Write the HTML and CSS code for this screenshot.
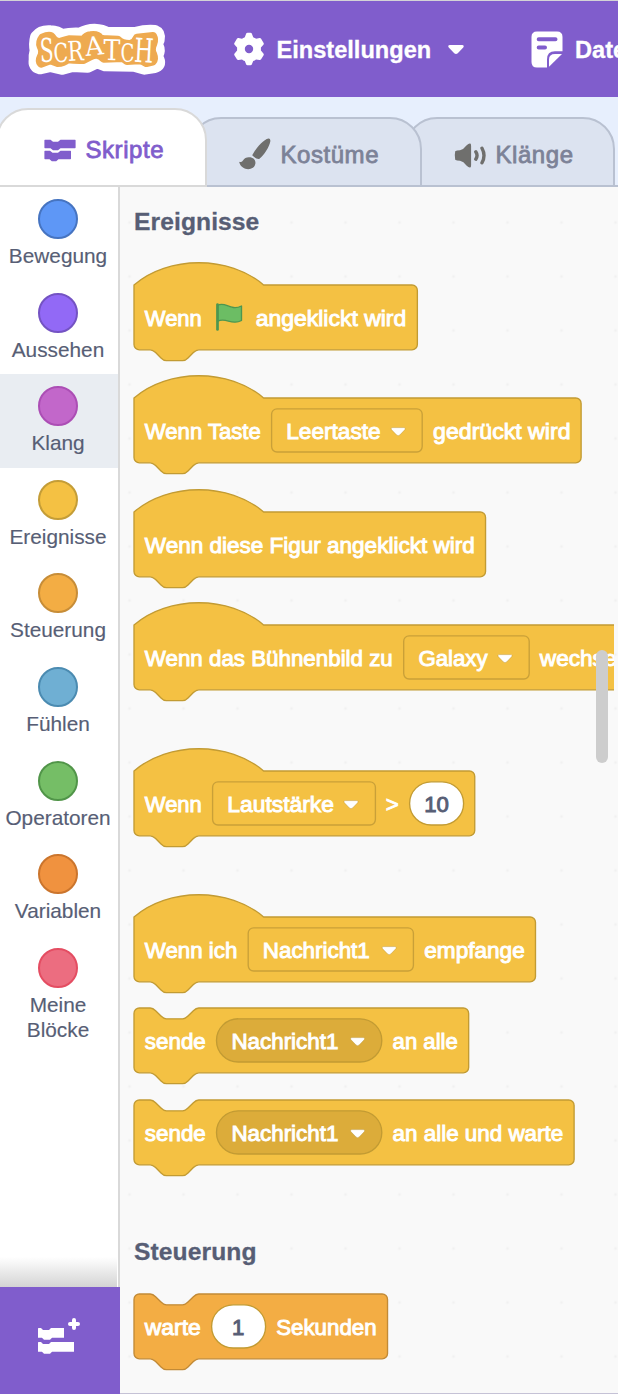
FILE: index.html
```html
<!DOCTYPE html>
<html lang="de">
<head>
<meta charset="utf-8">
<title>Scratch</title>
<link rel="stylesheet" href="styles.css">
</head>
<body>
<svg class="defs" width="0" height="0" aria-hidden="true">
  <symbol id="caret" viewBox="0 0 16 10" overflow="visible"><path d="M2.4 1H13.6C15 1 15.5 2.3 14.6 3.2L9.6 8.4Q8 9.8 6.400 8.4L1.4 3.2C.5 2.3 1 1 2.4 1Z"/></symbol>
</svg>
<header class="menu-bar">
  <svg class="logo" viewBox="80 65 420 165">
    <path class="logo-rim" d="M113 112Q125 97 150 99Q170 100 183 110Q215 104 240 106Q262 94 282 94Q305 95 320 104L405 104Q440 95 462 98Q472 102 469 118Q460 130 467 140Q472 150 466 162Q463 172 469 180Q474 192 462 194L432 199L400 190L315 189L290 179L262 193L215 191L185 199L150 191L120 198Q106 195 109 180Q108 165 112 150Q108 130 113 112Z"/>
    <path class="logo-fill" d="M126 112Q150 100 157 113Q170 128 182 124Q195 120 206 117L250 118Q258 106 270 105Q292 102 298 112Q302 117 320 117L352 118Q366 132 390 131Q404 128 410 112L458 107Q464 118 459 130Q450 148 459 163Q464 175 457 184L438 188Q425 180 415 180L380 182L368 173L310 175Q300 163 288 163Q275 163 250 179Q225 180 202 177Q190 188 172 188L150 180L122 190Q115 182 121 170Q130 155 121 138Q116 125 126 112Z"/>
    <g class="logo-text">
      <text transform="translate(120 185) rotate(-2) scale(.6 .98)">S</text>
      <text transform="translate(161 186) rotate(-3) scale(.57 .78)">C</text>
      <text transform="translate(203 182) rotate(-3) scale(.64 .82)">R</text>
      <text transform="translate(257 167) rotate(-6) scale(.76 .77)">A</text>
      <text transform="translate(309 179) rotate(1) scale(.76 .86)">T</text>
      <text transform="translate(361 184) rotate(-1) scale(.54 .75)">C</text>
      <text transform="translate(400 184) rotate(3) scale(.66 1)">H</text>
    </g>
  </svg>
  <div class="menu-item settings">
    <svg class="gear" viewBox="0 0 32 34"><path fill-rule="evenodd" d="M13.2 1.6Q13.6 .8 14.5 .8H17.5Q18.4 .8 18.8 1.6L20.2 5.2Q21.7 5.8 23 6.7L26.6 6.1Q27.6 6 28.1 6.8L30.6 11Q31.1 11.9 30.4 12.7L27.9 15.6V18.6L30.4 21.6Q31.1 22.4 30.6 23.3L28.1 27.3Q27.6 28.1 26.6 28L23 27.4Q21.7 28.4 20.2 29L18.8 32.5Q18.4 33.3 17.5 33.3H14.5Q13.6 33.3 13.2 32.5L11.8 29Q10.3 28.4 9 27.4L5.4 28Q4.4 28.1 3.9 27.3L1.4 23.3Q.9 22.4 1.6 21.6L4.1 18.6V15.6L1.6 12.7Q.9 11.9 1.4 11L3.9 6.8Q4.4 6 5.4 6.1L9 6.7Q10.3 5.8 11.8 5.2ZM16 12.8A4.2 4.2 0 1 0 16 21.2A4.2 4.2 0 1 0 16 12.8Z"/></svg>
    <span>Einstellungen</span>
    <svg class="menu-caret"><use href="#caret"/></svg>
  </div>
  <div class="menu-item">
    <svg class="file" viewBox="0 0 32 37"><path fill-rule="evenodd" d="M6 .5H26Q31.5 .5 31.5 6V20.3H24Q16 20.3 16 28.5V36.5H6Q.5 36.5 .5 31V6Q.5 .5 6 .5ZM7.7 6.2A2 2 0 0 0 7.7 10.2H24.5A2 2 0 0 0 24.5 6.2ZM7.7 14.4A2 2 0 0 0 7.7 18.4H14A2 2 0 0 0 14 14.4Z"/><path d="M18 35.8V28.5Q18 23 24 23H31Z"/></svg>
    <span>Datei</span>
  </div>
</header>
<nav class="tabs">
  <div class="tab active">
    <svg class="tab-icon code" viewBox="0 0 32 23"><path d="M1 .7H6.5L9 2.7H14L16.5 .7H31Q31.6 .7 31.6 1.3V8.6Q31.6 9.2 31 9.2H16.5L14 11.2H9L6.5 9.2H1Q.4 9.2 .4 8.6V1.3Q.4 .7 1 .7ZM1 11.7H6L8.5 13.7H14L16.5 11.7H26.4Q27 11.7 27 12.3V19.6Q27 20.2 26.4 20.2H14.5L12.2 22.3H7.8L5.5 20.2H1Q.4 20.2 .4 19.6V12.3Q.4 11.7 1 11.7Z"/></svg>
    <span>Skripte</span>
  </div>
  <div class="tab costumes">
    <svg class="tab-icon brush" viewBox="0 0 32 32"><path d="M29.5 .5Q31.7 .3 31.3 3.4C30.4 8.7 25.5 16.5 20.2 21Q17 21.4 13.2 17.3C16 11.5 24 1.5 29.5 .5ZM9.8 19.3C14.5 19.2 16.8 22 16.4 25.6C15.8 30.4 10.5 32.2 6.4 30.8C3 29.7 .5 26.6 .2 23.8Q2.5 24.6 4 22.4Q6 19.3 9.8 19.3Z"/></svg>
    <span>Kostüme</span>
  </div>
  <div class="tab sounds">
    <svg class="tab-icon speaker" viewBox="0 0 32 25"><path d="M1.2 8.3Q2.5 7.4 6 7.3Q9.5 6.5 12.7 2.3Q14.8 .2 16.3 .6Q17.1 .9 17.1 3V22Q17.1 24.1 16.3 24.4Q14.8 24.8 12.7 22.7Q9.5 18.5 6 17.8Q2.5 17.7 1.2 16.8Q.3 12.5 1.2 8.3Z"/><path class="wave" d="M21.8 8.8Q24.3 12.5 21.8 16.2M28 5.2Q32 12.5 28 19.8"/></svg>
    <span>Klänge</span>
  </div>
</nav>
<main class="editor">
  <aside class="sidebar">
    <ul class="categories">
      <li><i class="dot motion"></i>Bewegung</li>
      <li><i class="dot looks"></i>Aussehen</li>
      <li class="selected"><i class="dot sound"></i>Klang</li>
      <li><i class="dot events"></i>Ereignisse</li>
      <li><i class="dot control"></i>Steuerung</li>
      <li><i class="dot sensing"></i>Fühlen</li>
      <li><i class="dot operators"></i>Operatoren</li>
      <li><i class="dot variables"></i>Variablen</li>
      <li><i class="dot custom"></i>Meine Blöcke</li>
    </ul>
    <div class="fade"></div>
    <div class="extension">
      <svg viewBox="0 0 42 37"><path d="M.5 10H3L5 12H11L13 10H26V19.8H14L12 21.8H6L4 19.8H0V10.5ZM.5 24H3L5 26H11L13 24H36V33.8H14L12 35.8H6L4 33.8H0V24.5Z"/><path class="plus" d="M36 2V10M32 6H40"/></svg>
    </div>
  </aside>
  <section class="palette">
    <div class="flyout">
      <h2>Ereignisse</h2>
      <svg class="block hat">
        <path class="shape" transform="scale(1.35)" d="M0 0c25-22 71-22 96 0H205.9a4 4 0 0 1 4 4v40a4 4 0 0 1-4 4H48c-2 0-3 1-4 2l-4 4c-1 1-2 2-4 2H24c-2 0-3-1-4-2l-4-4c-1-1-2-2-4-2H4a4 4 0 0 1-4-4z"/>
        <text x="10.8" y="40.6" textLength="57" lengthAdjust="spacingAndGlyphs">Wenn</text>
        <path class="flag" d="M83.5 20.5C91 15.5 96 26.5 107.5 21V35.5C97.500 41 91.5 31.5 83.5 36.5Z"/><path class="pole" d="M83.500 19.5V44.5"/>
        <text x="121.7" y="40.6" textLength="150.6" lengthAdjust="spacingAndGlyphs">angeklickt wird</text>
      </svg>
      <svg class="block hat">
        <path class="shape" transform="scale(1.35)" d="M0 0c25-22 71-22 96 0H327.2a4 4 0 0 1 4 4v40a4 4 0 0 1-4 4H48c-2 0-3 1-4 2l-4 4c-1 1-2 2-4 2H24c-2 0-3-1-4-2l-4-4c-1-1-2-2-4-2H4a4 4 0 0 1-4-4z"/>
        <text x="10.8" y="40.6" textLength="116" lengthAdjust="spacingAndGlyphs">Wenn Taste</text>
        <rect class="field" x="137.6" y="10.8" width="150.6" height="43.2" rx="5.4"/>
        <text x="152.3" y="40.6" textLength="94.3" lengthAdjust="spacingAndGlyphs">Leertaste</text>
        <use class="arrow" href="#caret" x="256.2" y="28.6" width="16" height="10"/>
        <text x="299.1" y="40.6" textLength="137.4" lengthAdjust="spacingAndGlyphs">gedrückt wird</text>
      </svg>
      <svg class="block hat">
        <path class="shape" transform="scale(1.35)" d="M0 0c25-22 71-22 96 0H256.4a4 4 0 0 1 4 4v40a4 4 0 0 1-4 4H48c-2 0-3 1-4 2l-4 4c-1 1-2 2-4 2H24c-2 0-3-1-4-2l-4-4c-1-1-2-2-4-2H4a4 4 0 0 1-4-4z"/>
        <text x="10.8" y="40.6" textLength="329.9" lengthAdjust="spacingAndGlyphs">Wenn diese Figur angeklickt wird</text>
      </svg>
      <svg class="block hat spaced">
        <path class="shape" transform="scale(1.35)" d="M0 0c25-22 71-22 96 0H416a4 4 0 0 1 4 4v40a4 4 0 0 1-4 4H48c-2 0-3 1-4 2l-4 4c-1 1-2 2-4 2H24c-2 0-3-1-4-2l-4-4c-1-1-2-2-4-2H4a4 4 0 0 1-4-4z"/>
        <text x="10.8" y="40.6" textLength="248" lengthAdjust="spacingAndGlyphs">Wenn das Bühnenbild zu</text>
        <rect class="field" x="269.7" y="10.8" width="125.5" height="43.2" rx="5.4"/>
        <text x="284.4" y="40.6" textLength="69.2" lengthAdjust="spacingAndGlyphs">Galaxy</text>
        <use class="arrow" href="#caret" x="363" y="28.6" width="16" height="10"/>
        <text x="405.8" y="40.6" textLength="88" lengthAdjust="spacingAndGlyphs">wechselt</text>
      </svg>
      <svg class="block hat spaced">
        <path class="shape" transform="scale(1.35)" d="M0 0c25-22 71-22 96 0H248.400a4 4 0 0 1 4 4v40a4 4 0 0 1-4 4H48c-2 0-3 1-4 2l-4 4c-1 1-2 2-4 2H24c-2 0-3-1-4-2l-4-4c-1-1-2-2-4-2H4a4 4 0 0 1-4-4z"/>
        <text x="10.8" y="40.6" textLength="57" lengthAdjust="spacingAndGlyphs">Wenn</text>
        <rect class="field" x="78.6" y="10.8" width="162.8" height="43.2" rx="5.4"/>
        <text x="93.3" y="40.6" textLength="106.6" lengthAdjust="spacingAndGlyphs">Lautstärke</text>
        <use class="arrow" href="#caret" x="209" y="28.6" width="16" height="10"/>
        <text x="251.8" y="40.6">&gt;</text>
        <rect class="input" x="275.6" y="10.8" width="54" height="43.2" rx="21.6"/>
        <text class="value" x="302.6" y="40.6">10</text>
      </svg>
      <svg class="block to-stack">
        <path class="shape" transform="scale(1.35)" d="M0 0c25-22 71-22 96 0H293.4a4 4 0 0 1 4 4v40a4 4 0 0 1-4 4H48c-2 0-3 1-4 2l-4 4c-1 1-2 2-4 2H24c-2 0-3-1-4-2l-4-4c-1-1-2-2-4-2H4a4 4 0 0 1-4-4z"/>
        <text x="10.8" y="40.6" textLength="92.5" lengthAdjust="spacingAndGlyphs">Wenn ich</text>
        <rect class="field" x="114.2" y="10.8" width="165.2" height="43.2" rx="5.4"/>
        <text x="128.8" y="40.6" textLength="107" lengthAdjust="spacingAndGlyphs">Nachricht1</text>
        <use class="arrow" href="#caret" x="247.2" y="28.6" width="16" height="10"/>
        <text x="290.3" y="40.6" textLength="100.4" lengthAdjust="spacingAndGlyphs">empfange</text>
      </svg>
      <svg class="block to-stack">
        <path class="shape" transform="scale(1.35)" d="M0 4a4 4 0 0 1 4-4H12c2 0 3 1 4 2l4 4c1 1 2 2 4 2h12c2 0 3-1 4-2l4-4c1-1 2-2 4-2H243.9a4 4 0 0 1 4 4v40a4 4 0 0 1-4 4H48c-2 0-3 1-4 2l-4 4c-1 1-2 2-4 2H24c-2 0-3-1-4-2l-4-4c-1-1-2-2-4-2H4a4 4 0 0 1-4-4z"/>
        <text x="10.8" y="40.6" textLength="61" lengthAdjust="spacingAndGlyphs">sende</text>
        <rect class="menu" x="82.5" y="10.8" width="165.3" height="43.2" rx="21.6"/>
        <text x="97.4" y="40.6" textLength="107" lengthAdjust="spacingAndGlyphs">Nachricht1</text>
        <use class="arrow" href="#caret" x="215.6" y="28.6" width="16" height="10"/>
        <text x="258.6" y="40.6" textLength="65.2" lengthAdjust="spacingAndGlyphs">an alle</text>
      </svg>
      <svg class="block last">
        <path class="shape" transform="scale(1.35)" d="M0 4a4 4 0 0 1 4-4H12c2 0 3 1 4 2l4 4c1 1 2 2 4 2h12c2 0 3-1 4-2l4-4c1-1 2-2 4-2H322a4 4 0 0 1 4 4v40a4 4 0 0 1-4 4H48c-2 0-3 1-4 2l-4 4c-1 1-2 2-4 2H24c-2 0-3-1-4-2l-4-4c-1-1-2-2-4-2H4a4 4 0 0 1-4-4z"/>
        <text x="10.8" y="40.6" textLength="61" lengthAdjust="spacingAndGlyphs">sende</text>
        <rect class="menu" x="82.5" y="10.8" width="165.3" height="43.2" rx="21.6"/>
        <text x="97.4" y="40.6" textLength="107" lengthAdjust="spacingAndGlyphs">Nachricht1</text>
        <use class="arrow" href="#caret" x="215.6" y="28.6" width="16" height="10"/>
        <text x="258.6" y="40.6" textLength="170.6" lengthAdjust="spacingAndGlyphs">an alle und warte</text>
      </svg>
      <h2>Steuerung</h2>
      <svg class="block control-block">
        <path class="shape" transform="scale(1.35)" d="M0 4a4 4 0 0 1 4-4H12c2 0 3 1 4 2l4 4c1 1 2 2 4 2h12c2 0 3-1 4-2l4-4c1-1 2-2 4-2H183.8a4 4 0 0 1 4 4v40a4 4 0 0 1-4 4H48c-2 0-3 1-4 2l-4 4c-1 1-2 2-4 2H24c-2 0-3-1-4-2l-4-4c-1-1-2-2-4-2H4a4 4 0 0 1-4-4z"/>
        <text x="10.8" y="40.6" textLength="56" lengthAdjust="spacingAndGlyphs">warte</text>
        <rect class="input" x="77.6" y="10.8" width="54" height="43.2" rx="21.6"/>
        <text class="value" x="104.2" y="40.6">1</text>
        <text x="142.2" y="40.6" textLength="100.4" lengthAdjust="spacingAndGlyphs">Sekunden</text>
      </svg>
    </div>
    <div class="scrollbar"></div>
  </section>
</main>
</body>
</html>
```
FILE: styles.css
```css
* { box-sizing: border-box; }
body {
  margin: 0;
  width: 618px;
  height: 1394px;
  overflow: hidden;
  display: flex;
  flex-direction: column;
  background: #e7effd;
  color: #575e75;
  font-family: "Liberation Sans", Arial, sans-serif;
}
svg { display: block; flex: none; }
.defs { position: absolute; }

.menu-bar {
  height: 97px;
  flex: none;
  display: flex;
  align-items: center;
  border-top: 1px solid #d3d3d6;
  background: #805dcc;
  color: #fff;
  fill: #fff;
  font-size: 23.6px;
  font-weight: bold;
}
.logo { width: 140px; height: 55px; margin: 1px 66px 0 26.5px; overflow: visible; }
.logo-rim { fill: #fff; stroke: #fff; stroke-width: 48; stroke-linejoin: round; }
.logo-fill { fill: #eeaa50; stroke: #eeaa50; stroke-width: 24; stroke-linejoin: round; }
.logo-text { font-family: "DejaVu Serif", serif; font-size: 100px; font-weight: normal; fill: #fff; }
.menu-item { display: flex; align-items: center; white-space: nowrap; }
.menu-item span { padding-top: 2px; -webkit-text-stroke: .3px #fff; }
.settings { width: 298.5px; flex: none; }
.gear { width: 32px; height: 34px; margin-right: 12px; }
.menu-caret { width: 18px; height: 11px; margin-left: 15.5px; }
.file { width: 32px; height: 37px; margin-right: 12px; }

.tabs {
  height: 90px;
  flex: none;
  display: flex;
  align-items: flex-end;
  border-bottom: 2px solid #b9c1d1;
  font-size: 24px;
}
.tab {
  height: 70px;
  margin-bottom: -2px;
  display: flex;
  align-items: center;
  border: 2px solid #b9c1d1;
  border-radius: 32px 32px 0 0;
  background: #dce3f0;
  color: #7c8297;
  fill: #6f6f6d;
  letter-spacing: .55px;
  -webkit-text-stroke: .8px currentColor;
  flex: none;
  padding-top: 5px;
}
.tab-icon { stroke: none; }
.tab.active {
  position: relative;
  z-index: 3;
  width: 211px;
  height: 79px;
  margin-left: -4px;
  padding: 4px 0 0 46px;
  border-color: #d9d9d9;
  background: #fff;
  color: #805dcc;
  fill: #805dcc;
}
.costumes { position: relative; z-index: 2; width: 233px; margin-left: -18px; padding-left: 48px; }
.sounds { width: 210px; margin-left: -17px; padding-left: 47px; }
.code { width: 32px; height: 23px; margin: 1px 9.5px 0 0; }
.brush { width: 32px; height: 32px; margin: -1px 9.5px 0 0; }
.speaker { width: 32px; height: 25px; margin: 2px 9.5px 0 0; }
.wave { fill: none; stroke: #6f6f6d; stroke-width: 3.4; stroke-linecap: round; }

.editor { flex: 1; display: flex; min-height: 0; }
.sidebar {
  width: 120px;
  flex: none;
  display: flex;
  flex-direction: column;
  border-right: 2px solid #d9d9d9;
  background: #fff;
}
.categories { list-style: none; margin: 0; padding: 0; flex: 1; }
.categories li {
  height: 93.6px;
  padding: 12px 16px 0 14px;
  display: flex;
  flex-direction: column;
  align-items: center;
  font-size: 20.8px;
  line-height: 25px;
  text-align: center;
  -webkit-text-stroke: .15px currentColor;
}
.categories .selected { background: #e9edf2; }
.dot { width: 40px; height: 40px; flex: none; margin-bottom: 4px; border: 2px solid; border-radius: 50%; }
.motion { background: #5e97f6; border-color: #4674c1; }
.looks { background: #9269f6; border-color: #7453c3; }
.sound { background: #c267ca; border-color: #ac4eb5; }
.events { background: #f4c143; border-color: #c49d37; }
.control { background: #f3ad44; border-color: #c78d38; }
.sensing { background: #6fafd3; border-color: #4b8bb1; }
.operators { background: #75be66; border-color: #519549; }
.variables { background: #f0923f; border-color: #cb752d; }
.custom { background: #ec6d80; border-color: #e44d62; }
.fade { width: 117px; height: 30px; background: linear-gradient(#fff, #d4d4d4); }
.extension {
  width: 120px;
  height: 107px;
  flex: none;
  padding: 31px 0 0 38px;
  background: #805dcc;
  fill: #fff;
}
.extension svg { width: 42px; height: 37px; }
.plus { stroke: #fff; stroke-width: 4; stroke-linecap: round; }

.palette {
  flex: 1;
  position: relative;
  padding-left: 14px;
  border-bottom: 1px solid #c5c2d6;
  background: #f9f9f9 radial-gradient(circle, #f1f1f1 1.2px, transparent 1.7px) -17.5px 8.5px / 54px 54px;
}
.flyout { width: 484px; height: 1206px; overflow: hidden; margin-left: -4px; padding: 21px 0 0 4px; }
h2 { margin: 0; height: 28px; font-size: 24.6px; line-height: 28px; letter-spacing: .1px; -webkit-text-stroke: .3px currentColor; }
.block {
  width: 480px;
  height: 64.8px;
  margin-bottom: 48.6px;
  overflow: visible;
  fill: #fff;
  font-size: 22.2px;
}
h2 + .hat { margin-top: 48.9px; }
.spaced { margin-bottom: 81px; }
.to-stack { margin-bottom: 27px; }
.last { margin-bottom: 73.2px; }
.control-block { margin-top: 28.2px; }
.block text { stroke: #fff; stroke-width: .95px; }
.shape { fill: #f4c143; stroke: #c29b33; stroke-width: 1; }
.control-block .shape { fill: #f3ad44; stroke: #c28a36; }
.field { fill: none; stroke: #c9a038; stroke-width: 1.35; }
.menu { fill: #dcac3a; stroke: #c29b33; stroke-width: 1.35; }
.input { fill: #fff; stroke: #c29b33; stroke-width: 1.35; }
.arrow { stroke: #b89236; stroke-opacity: .5; stroke-width: .9; }
.block .value { fill: #575e75; stroke: #575e75; text-anchor: middle; }
.flag { fill: #6cbd64; stroke: #4d9650; stroke-width: 1.35; stroke-linejoin: round; }
.pole { stroke: #4d9650; stroke-width: 2.7; stroke-linecap: round; }
.scrollbar {
  position: absolute;
  left: 476px;
  top: 463px;
  width: 12px;
  height: 113px;
  border-radius: 6px;
  background: #cdcdcd;
}
```
